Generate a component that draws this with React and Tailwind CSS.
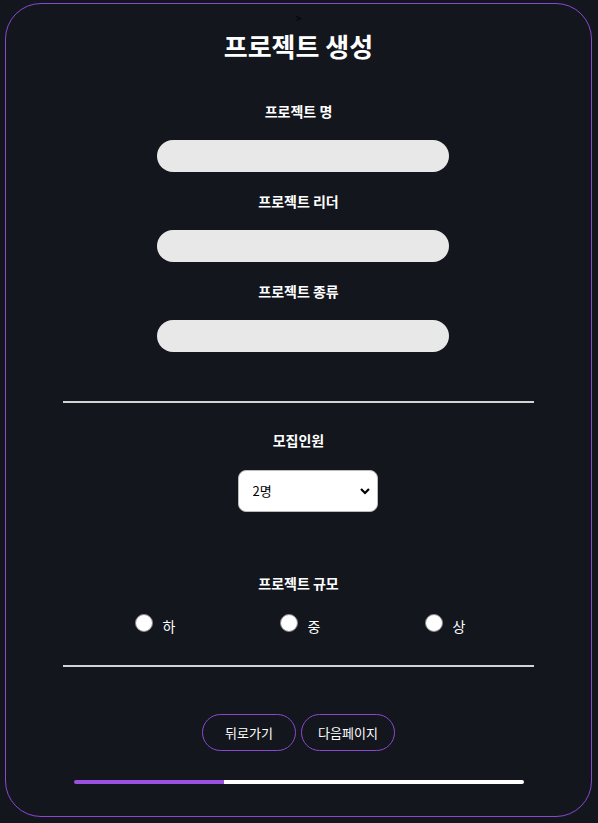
export default function App() {
    const fields = ["프로젝트 명", "프로젝트 리더", "프로젝트 종류"];
    const sizes = ["하", "중", "상"];

    return (
        <div
            className="min-h-screen bg-[#14161e] pt-[3px] pl-[5px]"
            style={{ fontFamily: '"Noto Sans CJK KR", "Noto Sans", sans-serif' }}
        >
            <div className="flex h-[814px] w-[587px] flex-col items-center rounded-[36px] border border-[#8a48d0] text-white">
                <p className="mt-[8px] h-[12px] text-[11px] leading-[12px] text-black">&gt;</p>
                <h1 className="mt-[7px] text-[26px] font-bold leading-[30px]">프로젝트 생성</h1>

                <div className="mt-[41px] flex flex-col items-center">
                    {fields.map((label, i) => (
                        <div key={label} className={`flex flex-col items-center ${i > 0 ? "mt-[20px]" : ""}`}>
                            <label className="text-[14px] font-bold leading-[18px]">{label}</label>
                            <input className="mt-[20px] ml-[9px] h-[32px] w-[292px] rounded-[16px] bg-[#e8e8e8] px-4 text-black outline-none" />
                        </div>
                    ))}
                </div>

                <div className="mt-[49px] h-[2px] w-[471px] bg-[#d4d4d4]" />

                <p className="mt-[28px] text-[14px] font-bold leading-[18px]">모집인원</p>
                <div className="relative mt-[21px] ml-[18px]">
                    <select
                        defaultValue="2"
                        className="h-[42px] w-[140px] appearance-none rounded-[8px] border border-[#bbb] bg-white pl-[14px] text-[13px] text-black outline-none"
                    >
                        <option value="2">2명</option>
                        <option value="3">3명</option>
                        <option value="4">4명</option>
                    </select>
                    <svg
                        className="pointer-events-none absolute top-[16px] right-[7px]"
                        width="12"
                        height="10"
                        viewBox="0 0 12 10"
                    >
                        <path d="M2 3 L6 7 L10 3" fill="none" stroke="black" strokeWidth="2.2" />
                    </svg>
                </div>

                <p className="mt-[62px] text-[14px] font-bold leading-[18px]">프로젝트 규모</p>
                <div className="mt-[19px] ml-[4px] flex w-[332px] justify-between">
                    {sizes.map((s) => (
                        <label key={s} className="flex w-[42px] items-center gap-[10px]">
                            <span className="h-[18px] w-[18px] shrink-0 rounded-full border border-[#888] bg-white" />
                            <span className="mt-[6px] text-[14px] leading-[18px]">{s}</span>
                        </label>
                    ))}
                </div>

                <div className="mt-[30px] h-[2px] w-[471px] bg-[#d4d4d4]" />

                <div className="mt-[47px] flex gap-[5px]">
                    <button className="h-[37px] w-[94px] rounded-full border border-[#8a48d0] text-[13px]">뒤로가기</button>
                    <button className="h-[37px] w-[94px] rounded-full border border-[#8a48d0] text-[13px]">다음페이지</button>
                </div>

                <div className="mt-[29px] flex w-[450px]">
                    <div className="h-[4px] w-[150px] rounded-l-sm bg-[#9b51e0]" />
                    <div className="h-[4px] w-[150px] bg-white" />
                    <div className="h-[4px] w-[150px] rounded-r-sm bg-white" />
                </div>
            </div>
        </div>
    );
}
